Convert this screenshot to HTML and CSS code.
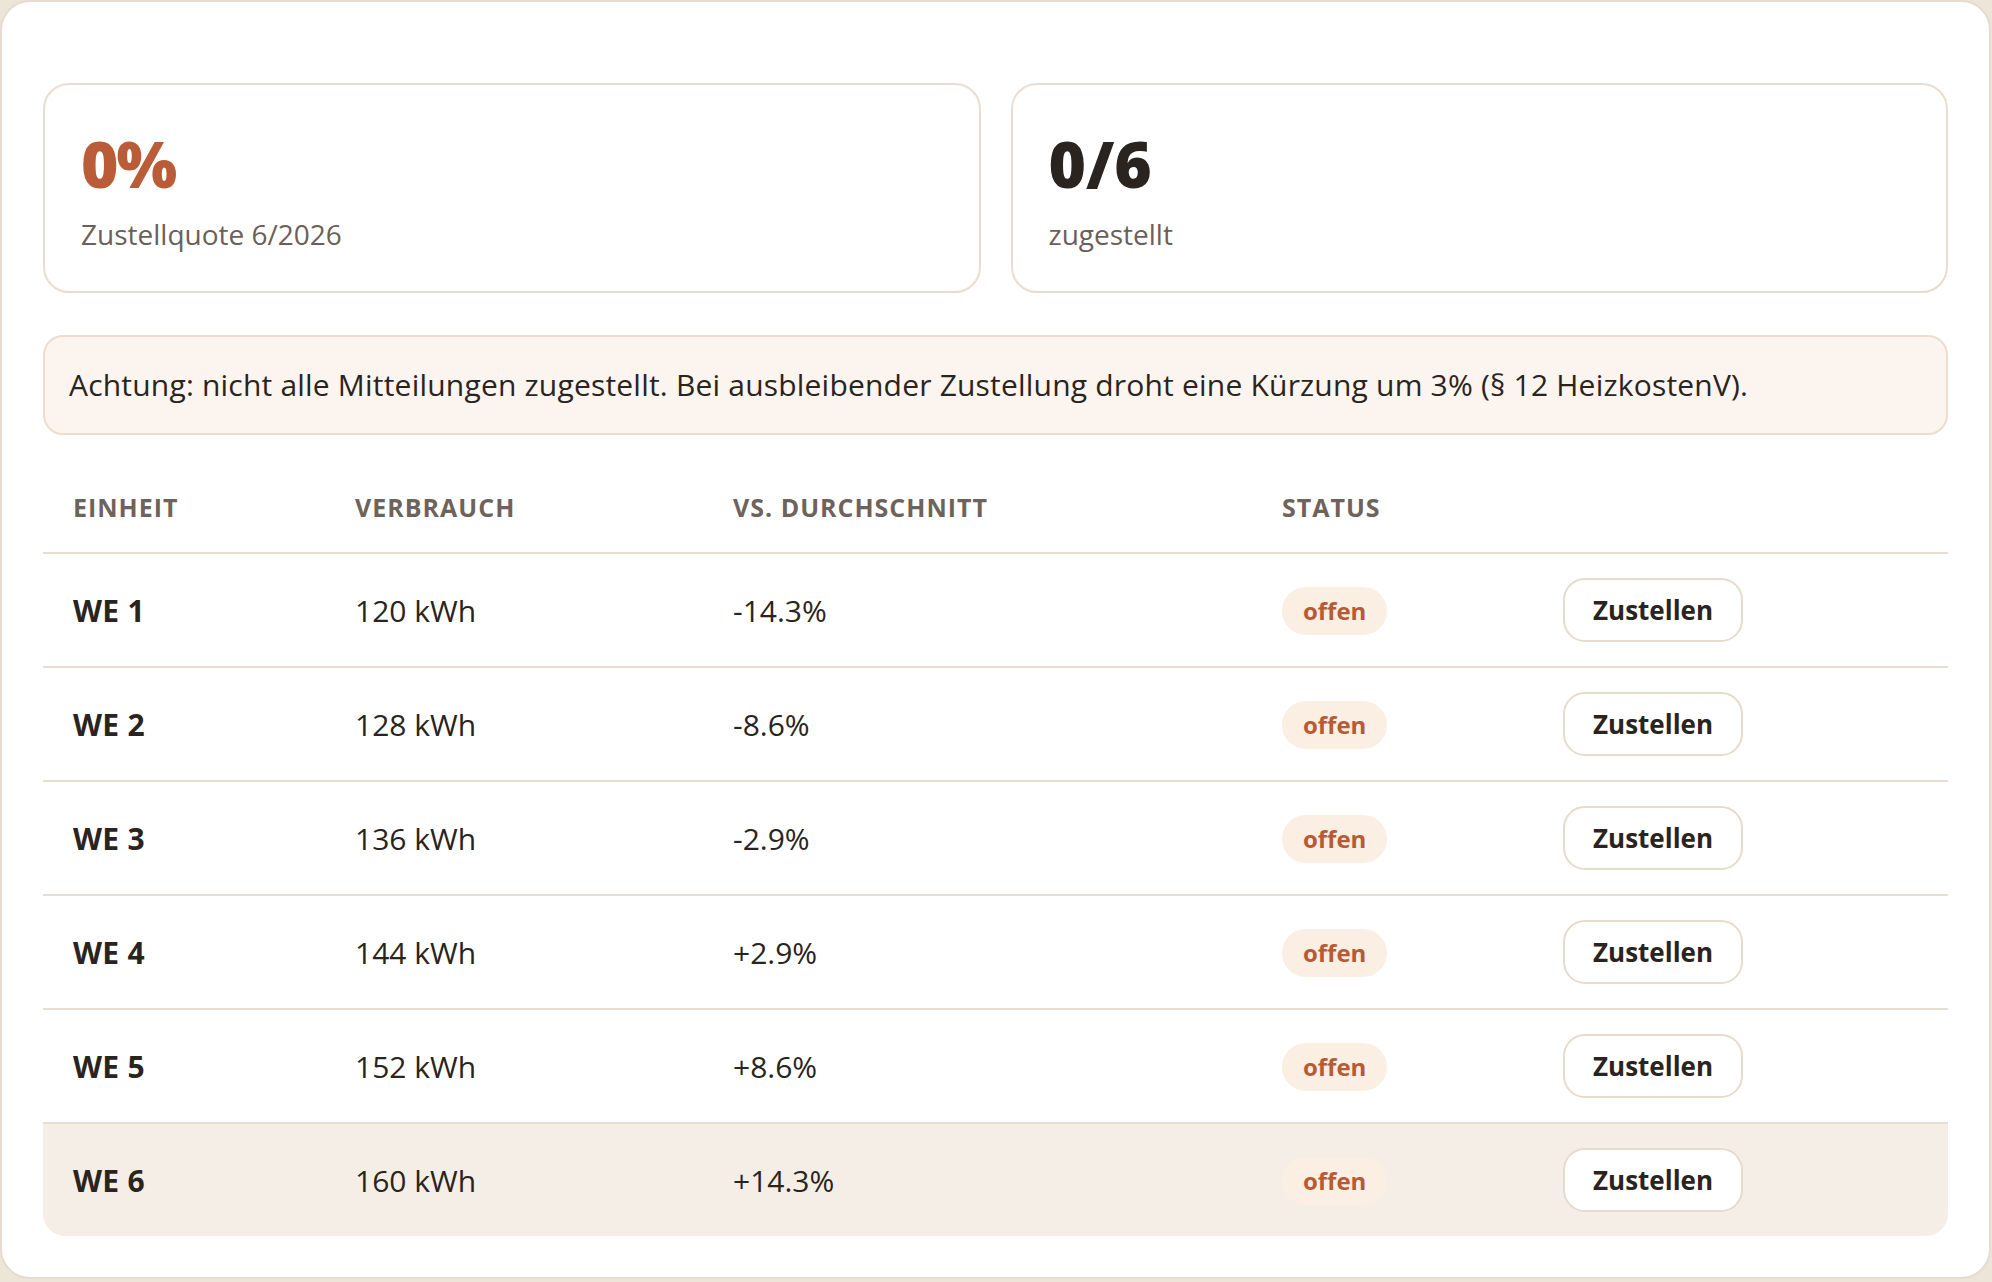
FILE: index.html
```html
<!DOCTYPE html>
<html lang="de">
<head>
<meta charset="utf-8">
<title>Zustellung der Verbrauchsmitteilungen</title>
<link rel="stylesheet" href="styles.css">
</head>
<body>
<section class="panel">
  <div class="stats">
    <div class="stat">
      <div class="stat-value accent">0%</div>
      <div class="stat-label">Zustellquote 6/2026</div>
    </div>
    <div class="stat">
      <div class="stat-value">0/6</div>
      <div class="stat-label">zugestellt</div>
    </div>
  </div>

  <div class="alert">Achtung: nicht alle Mitteilungen zugestellt. Bei ausbleibender Zustellung droht eine Kürzung um 3% (§ 12 HeizkostenV).</div>

  <div class="table">
    <div class="row head">
      <div class="cell">Einheit</div>
      <div class="cell">Verbrauch</div>
      <div class="cell">vs. Durchschnitt</div>
      <div class="cell">Status</div>
      <div class="cell"></div>
    </div>
    <div class="row">
      <div class="cell unit">WE 1</div>
      <div class="cell">120 kWh</div>
      <div class="cell">-14.3%</div>
      <div class="cell"><span class="badge">offen</span></div>
      <div class="cell"><button class="btn">Zustellen</button></div>
    </div>
    <div class="row">
      <div class="cell unit">WE 2</div>
      <div class="cell">128 kWh</div>
      <div class="cell">-8.6%</div>
      <div class="cell"><span class="badge">offen</span></div>
      <div class="cell"><button class="btn">Zustellen</button></div>
    </div>
    <div class="row">
      <div class="cell unit">WE 3</div>
      <div class="cell">136 kWh</div>
      <div class="cell">-2.9%</div>
      <div class="cell"><span class="badge">offen</span></div>
      <div class="cell"><button class="btn">Zustellen</button></div>
    </div>
    <div class="row">
      <div class="cell unit">WE 4</div>
      <div class="cell">144 kWh</div>
      <div class="cell">+2.9%</div>
      <div class="cell"><span class="badge">offen</span></div>
      <div class="cell"><button class="btn">Zustellen</button></div>
    </div>
    <div class="row">
      <div class="cell unit">WE 5</div>
      <div class="cell">152 kWh</div>
      <div class="cell">+8.6%</div>
      <div class="cell"><span class="badge">offen</span></div>
      <div class="cell"><button class="btn">Zustellen</button></div>
    </div>
    <div class="row active">
      <div class="cell unit">WE 6</div>
      <div class="cell">160 kWh</div>
      <div class="cell">+14.3%</div>
      <div class="cell"><span class="badge">offen</span></div>
      <div class="cell"><button class="btn">Zustellen</button></div>
    </div>
  </div>
</section>
</body>
</html>
```

FILE: styles.css
```css
* {
  box-sizing: border-box;
}

html, body {
  margin: 0;
  padding: 0;
}

body {
  background: #eee5d9;
  font-family: "Open Sans", "Noto Sans", sans-serif;
  color: #2a2420;
  height: 1282px;
  overflow: hidden;
}

.panel {
  width: 1991px;
  background: #ffffff;
  border: 2px solid #e6dbcd;
  border-radius: 30px;
  padding: 81px 41px 41px;
}

/* summary cards */
.stats {
  display: grid;
  grid-template-columns: 1fr 1fr;
  gap: 30px;
}

.stat {
  height: 210px;
  border: 2px solid #e8ddd0;
  border-radius: 26px;
  padding: 41px 36px 34px;
}

.stat-value {
  font-size: 64px;
  font-weight: 800;
  line-height: 76px;
  color: #2a2420;
}

.stat-value.accent {
  color: #b95c37;
  letter-spacing: -2px;
}

.stat-label {
  margin-top: 10px;
  font-size: 28px;
  line-height: 45px;
  color: #6b6058;
}

/* warning banner */
.alert {
  margin-top: 42px;
  height: 100px;
  background: #fcf4ee;
  border: 2px solid #ecddce;
  border-radius: 20px;
  padding: 25px 24px;
  font-size: 30px;
  line-height: 45px;
  letter-spacing: 0.2px;
  color: #2a2420;
  white-space: nowrap;
}

/* delivery table */
.table {
  margin-top: 30px;
}

.row {
  display: grid;
  grid-template-columns: 282px 378px 549px 281px 1fr;
  align-items: center;
  height: 114px;
  border-bottom: 2px solid #e8ddd0;
  font-size: 30px;
  line-height: 45px;
}

.row.head {
  height: 89px;
  font-size: 25px;
  font-weight: 700;
  letter-spacing: 1px;
  text-transform: uppercase;
  color: #6e635b;
  line-height: 37px;
  padding-bottom: 2px;
}

.row.active {
  height: 112px;
  border-bottom: none;
  background: #f5eee6;
  border-radius: 0 0 22px 22px;
}

.cell {
  padding: 0 30px;
}

.unit {
  font-weight: 700;
  letter-spacing: 0.3px;
}

.badge {
  display: inline-block;
  padding: 6px 21px;
  line-height: 36px;
  font-size: 24px;
  font-weight: 700;
  color: #b85a35;
  background: #fbeee2;
  border-radius: 24px;
}

.btn {
  height: 64px;
  padding: 0 28px;
  background: #ffffff;
  border: 2px solid #e6dbcd;
  border-radius: 22px;
  font-family: "Open Sans", "Noto Sans", sans-serif;
  font-size: 26px;
  font-weight: 700;
  color: #2a2420;
  line-height: 58px;
  cursor: pointer;
}
```
